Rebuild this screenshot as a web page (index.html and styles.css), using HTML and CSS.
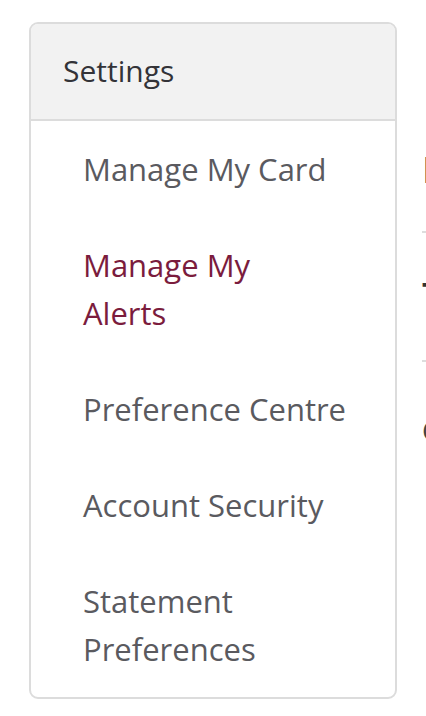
FILE: index.html
```html
<!DOCTYPE html>
<html lang="en">
<head>
<meta charset="utf-8">
<title>Settings</title>
<link rel="stylesheet" href="styles.css">
</head>
<body>
<div class="layout">
  <nav class="sidebar">
    <div class="sidebar-head">Settings</div>
    <ul class="menu">
      <li class="menu-item">Manage My Card</li>
      <li class="menu-item active">Manage My<br>Alerts</li>
      <li class="menu-item">Preference Centre</li>
      <li class="menu-item">Account Security</li>
      <li class="menu-item">Statement Preferences</li>
    </ul>
  </nav>
  <main class="content">
    <h1 class="title">Manage My Alerts</h1>
    <div class="row">Text alerts</div>
    <p class="note">Configure your alerts</p>
  </main>
</div>
</body>
</html>
```
FILE: styles.css
```css
html, body {
  margin: 0;
  padding: 0;
  background: #fff;
  overflow: hidden;
}
body {
  font-family: "Open Sans", Lato, sans-serif;
  width: 426px;
  height: 716px;
}
.layout {
  display: flex;
  gap: 25px;
  padding: 22px 0 0 29px;
  width: 1000px;
}
.sidebar {
  flex: 0 0 368px;
  box-sizing: border-box;
  width: 368px;
  border: 2px solid #dcdcdc;
  border-radius: 9px;
  overflow: hidden;
}
.sidebar-head {
  background: #f2f2f2;
  border-bottom: 2px solid #dcdcdc;
  height: 97px;
  box-sizing: border-box;
  padding: 0 0 2px 32px;
  display: flex;
  align-items: center;
  font-size: 30px;
  color: #333338;
}
.menu {
  list-style: none;
  margin: 0;
  padding: 0 20px 0 52px;
}
.menu-item {
  font-size: 31px;
  line-height: 48px;
  padding: 24px 0;
  color: #5a5a5f;
}
.menu-item.active {
  color: #7b1c3d;
}
.content {
  flex: 0 0 500px;
  padding-top: 124px;
}
.title {
  margin: 0;
  font-size: 36px;
  font-weight: 400;
  line-height: 48px;
  color: #333;
  padding-bottom: 37px;
  border-bottom: 2px solid #ddd;
}
.row {
  font-size: 30px;
  line-height: 48px;
  padding: 37px 0 42px;
  border-bottom: 2px solid #ddd;
  color: #333;
  font-weight: 700;
}
.note {
  margin: 48px 0 0;
  font-size: 28px;
  line-height: 40px;
  color: #444;
}
```
